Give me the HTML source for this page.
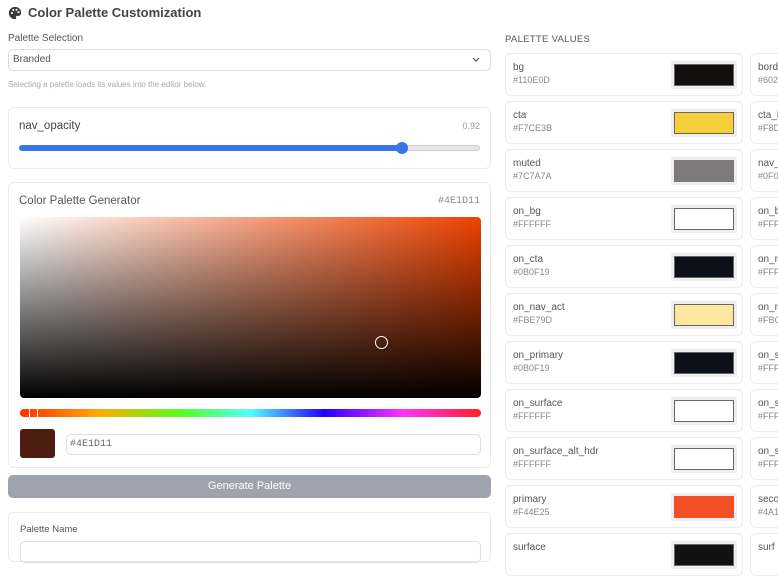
<!DOCTYPE html>
<html><head><meta charset="utf-8"><style>
*{box-sizing:border-box;margin:0;padding:0}
body{width:778px;height:547px;overflow:hidden;background:#fff;font-family:"Liberation Sans",sans-serif;color:#444;position:relative}
.abs{position:absolute}
.card{position:absolute;border:1px solid #ebebeb;border-radius:6px;background:#fff}
.pc{position:absolute;width:238px;height:43px;border:1px solid #ebebeb;border-radius:6px;background:#fff;overflow:hidden}
.pc .n{position:absolute;left:7px;top:8px;font-size:10px;color:#555}
.pc .v{position:absolute;left:7px;top:21px;font-size:9px;color:#888}
.pc .sw{position:absolute;left:165px;top:7px;width:66px;height:28px;background:#eee;border-radius:3px;padding:3px}
.pc .sw div{width:100%;height:100%;border:1px solid #666}
</style></head><body>
<svg class="abs" style="left:8px;top:6px" width="14" height="14" viewBox="0 0 16 16"><path d="M8 1a7 7 0 0 0 0 14c1.2 0 1.6-.9 1.2-1.7-.5-.9.1-2 1.2-2H12a3.5 3.5 0 0 0 3-3.5C15 4 12 1 8 1z" fill="#3a3a3a"/><circle cx="4.5" cy="8" r="1.2" fill="#fff"/><circle cx="6" cy="4.6" r="1.2" fill="#fff"/><circle cx="9.7" cy="4.4" r="1.2" fill="#fff"/><circle cx="12" cy="7" r="1.2" fill="#fff"/></svg>
<div class="abs" style="left:28px;top:5px;font-size:13px;font-weight:bold;color:#444">Color Palette Customization</div>
<div class="abs" style="left:8px;top:33px;font-size:10px;color:#555">Palette Selection</div>
<div class="abs" style="left:8px;top:49px;width:483px;height:22px;border:1px solid #ddd;border-radius:5px;font-size:10px;color:#555;padding:4px 4px">Branded
<svg class="abs" style="right:10px;top:7px" width="8" height="6" viewBox="0 0 8 6"><path d="M1 1l3 3 3-3" stroke="#555" fill="none" stroke-width="1.2"/></svg></div>
<div class="abs" style="left:8px;top:80px;font-size:8px;color:#aaa">Selecting a palette loads its values into the editor below.</div>
<div class="card" style="left:8px;top:107px;width:483px;height:62px">
<div class="abs" style="left:10px;top:12px;font-size:11.5px;color:#444">nav_opacity</div>
<div class="abs" style="right:10px;top:13px;font-size:9px;color:#999">0.92</div>
<div class="abs" style="left:10px;top:37px;width:461px;height:6px;border-radius:3px;background:#e8e8e8;border:1px solid #ccc"></div>
<div class="abs" style="left:10px;top:37px;width:384px;height:6px;border-radius:3px;background:#3b73e8"></div>
<div class="abs" style="left:387px;top:34px;width:12px;height:12px;border-radius:6px;background:#3b73e8"></div>
</div>
<div class="card" style="left:8px;top:182px;width:483px;height:286px">
<div class="abs" style="left:10px;top:12px;font-size:11.5px;color:#555">Color Palette Generator</div>
<div class="abs" style="right:10px;top:13px;font-size:10px;color:#888;font-family:'Liberation Mono',monospace">#4E1D11</div>
<div class="abs" style="left:11px;top:34px;width:461px;height:181px;border-radius:4px;background:linear-gradient(to bottom,rgba(0,0,0,0),#000),linear-gradient(to right,#fff,#ee4200)"></div>
<div class="abs" style="left:366px;top:153px;width:13px;height:13px;border-radius:7px;border:1.5px solid #fff"></div>
<div class="abs" style="left:11px;top:226px;width:461px;height:8px;border-radius:4px;background:linear-gradient(to right,#f30,#fa0 17%,#5f2 35%,#5ff 50%,#20f 66%,#f3f 83%,#f22)"></div>
<div class="abs" style="left:20px;top:226px;width:1px;height:8px;background:#fff"></div>
<div class="abs" style="left:28px;top:226px;width:1px;height:8px;background:#fff"></div>
<div class="abs" style="left:11px;top:246px;width:35px;height:29px;border-radius:3px;background:#4e1d11"></div>
<div class="abs" style="left:57px;top:251px;width:415px;height:21px;border:1px solid #ddd;border-radius:5px;font-family:'Liberation Mono',monospace;font-size:10px;color:#666;padding:4px 3px">#4E1D11</div>
</div>
<div class="abs" style="left:8px;top:475px;width:483px;height:23px;border-radius:5px;background:#9ea3ad;color:#fff;font-size:11px;text-align:center;line-height:23px">Generate Palette</div>
<div class="card" style="left:8px;top:512px;width:483px;height:50px">
<div class="abs" style="left:11px;top:11px;font-size:9.5px;color:#555">Palette Name</div>
<div class="abs" style="left:11px;top:28px;width:461px;height:22px;border:1px solid #ddd;border-radius:5px"></div>
</div>
<div class="abs" style="left:505px;top:34px;font-size:9.5px;color:#555;letter-spacing:.3px">PALETTE VALUES</div>
<div class="pc" style="left:505px;top:53px"><div class="n">bg</div><div class="v">#110E0D</div><div class="sw"><div style="background:#110e0d"></div></div></div>
<div class="pc" style="left:505px;top:101px"><div class="n">cta</div><div class="v">#F7CE3B</div><div class="sw"><div style="background:#f7ce3b"></div></div></div>
<div class="pc" style="left:505px;top:149px"><div class="n">muted</div><div class="v">#7C7A7A</div><div class="sw"><div style="background:#7c7a7a;border-color:#7c7a7a"></div></div></div>
<div class="pc" style="left:505px;top:197px"><div class="n">on_bg</div><div class="v">#FFFFFF</div><div class="sw"><div style="background:#fff"></div></div></div>
<div class="pc" style="left:505px;top:245px"><div class="n">on_cta</div><div class="v">#0B0F19</div><div class="sw"><div style="background:#0b0f19"></div></div></div>
<div class="pc" style="left:505px;top:293px"><div class="n">on_nav_act</div><div class="v">#FBE79D</div><div class="sw"><div style="background:#fbe79d"></div></div></div>
<div class="pc" style="left:505px;top:341px"><div class="n">on_primary</div><div class="v">#0B0F19</div><div class="sw"><div style="background:#0b0f19"></div></div></div>
<div class="pc" style="left:505px;top:389px"><div class="n">on_surface</div><div class="v">#FFFFFF</div><div class="sw"><div style="background:#fff"></div></div></div>
<div class="pc" style="left:505px;top:437px"><div class="n">on_surface_alt_hdr</div><div class="v">#FFFFFF</div><div class="sw"><div style="background:#fff"></div></div></div>
<div class="pc" style="left:505px;top:485px"><div class="n">primary</div><div class="v">#F44E25</div><div class="sw"><div style="background:#f44e25;border-color:#f44e25"></div></div></div>
<div class="pc" style="left:505px;top:533px"><div class="n">surface</div><div class="v"></div><div class="sw"><div style="background:#111"></div></div></div>
<div class="pc" style="left:750px;top:53px"><div class="n">border</div><div class="v">#602</div></div>
<div class="pc" style="left:750px;top:101px"><div class="n">cta_h</div><div class="v">#F8D</div></div>
<div class="pc" style="left:750px;top:149px"><div class="n">nav_b</div><div class="v">#0F0</div></div>
<div class="pc" style="left:750px;top:197px"><div class="n">on_b</div><div class="v">#FFF</div></div>
<div class="pc" style="left:750px;top:245px"><div class="n">on_n</div><div class="v">#FFF</div></div>
<div class="pc" style="left:750px;top:293px"><div class="n">on_n</div><div class="v">#FBC</div></div>
<div class="pc" style="left:750px;top:341px"><div class="n">on_s</div><div class="v">#FFF</div></div>
<div class="pc" style="left:750px;top:389px"><div class="n">on_s</div><div class="v">#FFF</div></div>
<div class="pc" style="left:750px;top:437px"><div class="n">on_s</div><div class="v">#FFF</div></div>
<div class="pc" style="left:750px;top:485px"><div class="n">seco</div><div class="v">#4A1</div></div>
<div class="pc" style="left:750px;top:533px"><div class="n">surf</div></div>
</body></html>
